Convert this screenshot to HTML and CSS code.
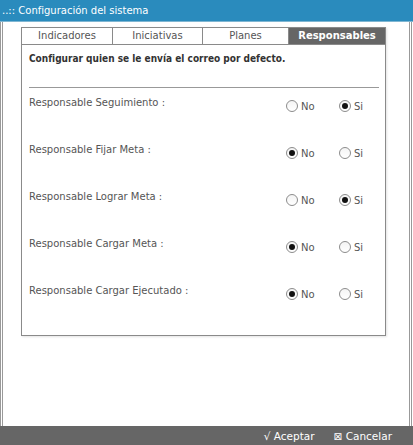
FILE: index.html
```html
<!DOCTYPE html>
<html lang="es">
<head>
    <meta charset="UTF-8">
    <title>Configuración del sistema</title>
    <link rel="stylesheet" href="styles.css">
</head>
<body>
    <div class="ventana">
        <div class="titulo">..:: Configuración del sistema</div>
        <div class="cuerpo">
            <div class="panel">
                <div class="tabs">
                    <div class="tab">Indicadores</div>
                    <div class="tab">Iniciativas</div>
                    <div class="tab">Planes</div>
                    <div class="tab activo">Responsables</div>
                </div>
                <div class="contenido">
                    <div class="encabezado">Configurar quien se le envía el correo por defecto.</div>
                    <div class="fila">
                        <span class="etiqueta">Responsable Seguimiento :</span>
                        <label class="opcion"><input type="radio" name="seg">No</label>
                        <label class="opcion"><input type="radio" name="seg" checked>Si</label>
                    </div>
                    <div class="fila">
                        <span class="etiqueta">Responsable Fijar Meta :</span>
                        <label class="opcion"><input type="radio" name="fijar" checked>No</label>
                        <label class="opcion"><input type="radio" name="fijar">Si</label>
                    </div>
                    <div class="fila">
                        <span class="etiqueta">Responsable Lograr Meta :</span>
                        <label class="opcion"><input type="radio" name="lograr">No</label>
                        <label class="opcion"><input type="radio" name="lograr" checked>Si</label>
                    </div>
                    <div class="fila">
                        <span class="etiqueta">Responsable Cargar Meta :</span>
                        <label class="opcion"><input type="radio" name="cargar" checked>No</label>
                        <label class="opcion"><input type="radio" name="cargar">Si</label>
                    </div>
                    <div class="fila">
                        <span class="etiqueta">Responsable Cargar Ejecutado :</span>
                        <label class="opcion"><input type="radio" name="ejec" checked>No</label>
                        <label class="opcion"><input type="radio" name="ejec">Si</label>
                    </div>
                </div>
            </div>
        </div>
        <div class="pie">
            <span class="boton">&#8730; Aceptar</span>
            <span class="boton">&#8864; Cancelar</span>
        </div>
    </div>
</body>
</html>
```

FILE: styles.css
```css
body {
    margin: 0;
    padding: 0;
    background-color: #ffffff;
    font-family: "DejaVu Sans", Verdana, sans-serif;
}
.ventana {
    width: 413px;
    height: 445px;
    display: flex;
    flex-direction: column;
}
.titulo {
    height: 21px;
    line-height: 21px;
    padding-left: 2px;
    background-color: #2a8bbd;
    border-bottom: 1px solid #7fb6d2;
    color: #ffffff;
    font-size: 10px;
}
.cuerpo {
    flex: 1;
    border-left: 3px double #999999;
    border-right: 3px double #999999;
    margin-right: 1px;
    padding: 5px 23px 0 18px;
}
.panel {
    border: 1px solid #8a8a8a;
    box-shadow: 1px 1px 2px #e4e4e4;
    height: 307px;
}
.tabs {
    display: grid;
    grid-template-columns: 91px 90px 86px 1fr;
    height: 16px;
    border-bottom: 1px solid #8a8a8a;
}
.tab {
    text-align: center;
    line-height: 16px;
    font-size: 10px;
    color: #555555;
    border-right: 1px solid #8a8a8a;
}
.tab.activo {
    border-right: none;
    background-color: #666666;
    color: #ffffff;
    font-weight: bold;
}
.contenido {
    padding: 0 6px 0 7px;
}
.encabezado {
    font-family: "DejaVu Sans Condensed", "DejaVu Sans", sans-serif;
    font-size: 10px;
    font-weight: bold;
    color: #333333;
    padding: 8px 0 23px;
    border-bottom: 1px solid #999999;
}
.fila {
    display: flex;
    align-items: flex-start;
    height: 47px;
    font-size: 10px;
    color: #555555;
}
.etiqueta {
    flex: none;
    width: 257px;
    margin-top: 9px;
}
.opcion {
    flex: none;
    width: 53px;
    display: flex;
    align-items: center;
    margin-top: 12px;
    color: #555555;
}
.opcion input {
    appearance: none;
    -webkit-appearance: none;
    margin: 0 3px 0 0;
    width: 12px;
    height: 12px;
    border: 1px solid #8c8c8c;
    border-radius: 50%;
    background: linear-gradient(#f4f4f4, #ffffff);
    display: grid;
    place-items: center;
}
.opcion input:checked::before {
    content: "";
    width: 6px;
    height: 6px;
    border-radius: 50%;
    background-color: #111111;
}
.pie {
    height: 19px;
    background-color: #666666;
    display: flex;
    justify-content: flex-end;
    align-items: center;
    gap: 19px;
    padding-right: 21px;
    color: #ffffff;
    font-size: 10.5px;
}
```
